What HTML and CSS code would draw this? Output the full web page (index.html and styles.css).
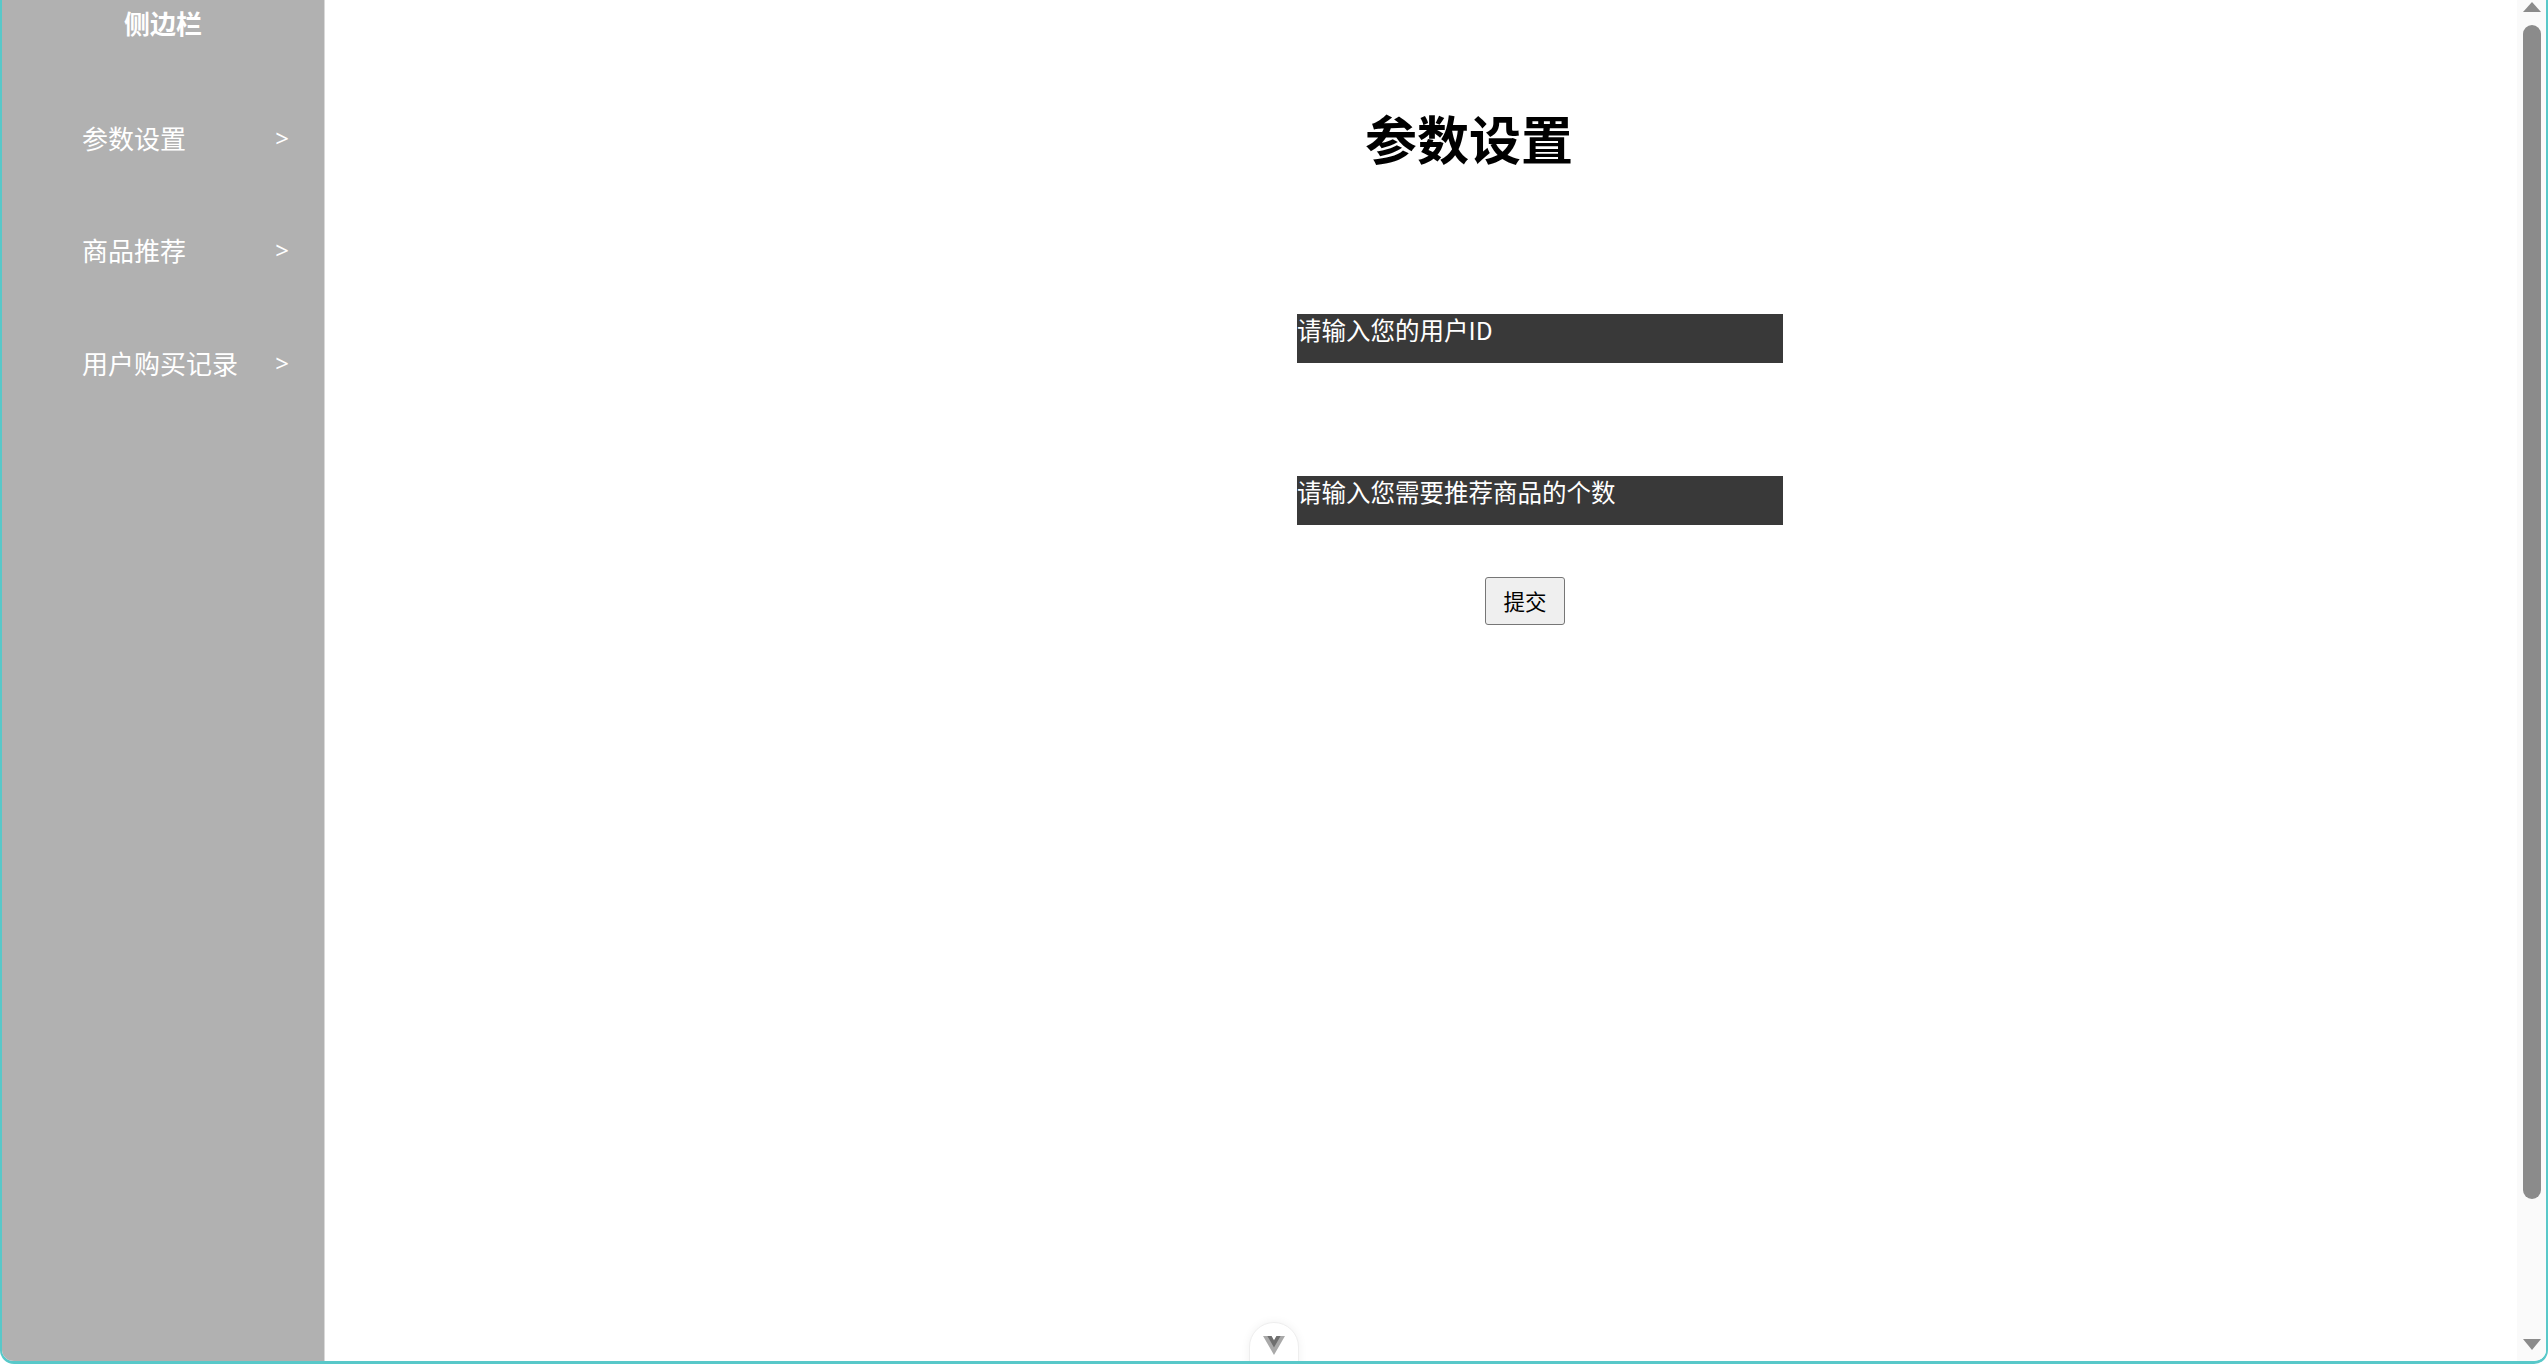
FILE: index.html
```html
<!DOCTYPE html>
<html lang="zh-CN">
<head>
<meta charset="utf-8">
<title>参数设置</title>
<link rel="stylesheet" href="styles.css">
</head>
<body>
<div class="frame">
  <aside class="sidebar">
    <div class="sidebar-title">侧边栏</div>
    <nav class="menu">
      <a class="menu-item"><span>参数设置</span><span class="arrow">&gt;</span></a>
      <a class="menu-item"><span>商品推荐</span><span class="arrow">&gt;</span></a>
      <a class="menu-item"><span>用户购买记录</span><span class="arrow">&gt;</span></a>
    </nav>
  </aside>
  <main class="main">
    <h1 class="page-title">参数设置</h1>
    <form class="form">
      <input class="field" type="text" placeholder="请输入您的用户ID">
      <input class="field field-second" type="text" placeholder="请输入您需要推荐商品的个数">
      <button class="submit" type="button">提交</button>
    </form>
  </main>
  <div class="scrollbar">
    <div class="sb-up"></div>
    <div class="sb-thumb"></div>
    <div class="sb-space"></div>
    <div class="sb-down"></div>
  </div>
  <div class="devtab">
    <svg class="vue-logo" viewBox="0 0 261.76 226.69" width="22" height="19">
      <path fill="#a9a9a9" d="M161.096.001l-30.225 52.351L100.647.001H-.005l130.877 226.688L261.749.001z"/>
      <path fill="#6f6f6f" d="M161.096.001l-30.225 52.351L100.647.001H52.346l78.526 136.01L209.398.001z"/>
    </svg>
  </div>
</div>
</body>
</html>
```
FILE: styles.css
```css
html, body {
  margin: 0;
  padding: 0;
  height: 100%;
  overflow: hidden;
  background: #ffffff;
}

body {
  font-family: "Noto Sans CJK SC", "Noto Sans", sans-serif;
}

.frame {
  position: relative;
  display: flex;
  height: 100vh;
  box-sizing: border-box;
  border-left: 2px solid #58c8c9;
  border-right: 2px solid #58c8c9;
  border-bottom: 3px solid #58c8c9;
  border-bottom-left-radius: 14px;
  border-bottom-right-radius: 14px;
  overflow: hidden;
  background: #ffffff;
}

/* Sidebar */
.sidebar {
  width: 323px;
  flex: none;
  box-sizing: border-box;
  background: #b1b1b1;
  border-right: 1px solid #d9d9d9;
  color: #ffffff;
}

.sidebar-title {
  margin-top: 10px;
  font-size: 26px;
  line-height: 26px;
  font-weight: 700;
  text-align: center;
}

.menu {
  display: flex;
  flex-direction: column;
  gap: 86.5px;
  margin-top: 88.5px;
}

.menu-item {
  display: flex;
  align-items: center;
  padding-left: 80px;
  padding-right: 35px;
  font-size: 26px;
  line-height: 26px;
  color: #ffffff;
}

.menu-item .arrow {
  margin-left: auto;
  font-family: "Noto Sans", sans-serif;
  font-size: 24px;
}

/* Main */
.main {
  flex: 1;
  min-width: 0;
}

.page-title {
  margin: 112px 0 0 1040px;
  font-size: 52px;
  line-height: 52px;
  font-weight: 700;
  color: #000000;
}

.form {
  display: flex;
  flex-direction: column;
  align-items: flex-start;
  margin: 150px 0 0 972px;
}

.field {
  width: 486px;
  height: 49px;
  box-sizing: border-box;
  margin: 0;
  padding: 3px 0 21px 0;
  border: none;
  outline: none;
  background: #393939;
  color: #ffffff;
  font-family: "Noto Sans CJK SC", "Noto Sans", sans-serif;
  font-size: 24.5px;
  line-height: 25px;
}

.field::placeholder {
  color: #ffffff;
  opacity: 1;
}

.field-second {
  margin-top: 113px;
}

.submit {
  margin: 52px 0 0 188px;
  width: 80px;
  height: 48px;
  padding: 0;
  box-sizing: border-box;
  background: #efefef;
  border: 1px solid #767676;
  border-radius: 3px;
  color: #000000;
  font-family: "Noto Sans CJK SC", "Noto Sans", sans-serif;
  font-size: 21.5px;
  line-height: 1;
}

/* Fake scrollbar */
.scrollbar {
  width: 29px;
  flex: none;
  display: flex;
  flex-direction: column;
  align-items: center;
  background: #fafafa;
  padding: 2px 0 11px 0;
  box-sizing: border-box;
}

.sb-up {
  width: 0;
  height: 0;
  border-left: 9.5px solid transparent;
  border-right: 9.5px solid transparent;
  border-bottom: 10px solid #8b8b8b;
}

.sb-thumb {
  margin-top: 13px;
  width: 18px;
  height: 1174px;
  border-radius: 9px;
  background: #8b8b8b;
}

.sb-space {
  flex: 1;
}

.sb-down {
  width: 0;
  height: 0;
  border-left: 9.5px solid transparent;
  border-right: 9.5px solid transparent;
  border-top: 11px solid #8b8b8b;
}

/* Floating devtools tab */
.devtab {
  position: absolute;
  left: 50%;
  bottom: -6px;
  transform: translateX(-50%);
  width: 50px;
  height: 45px;
  box-sizing: border-box;
  background: #ffffff;
  border: 1px solid #eeeeee;
  border-radius: 25px 25px 0 0;
  box-shadow: 0 0 10px rgba(0, 0, 0, 0.06);
  display: flex;
  justify-content: center;
  padding-top: 13px;
}

.vue-logo {
  display: block;
}
```
